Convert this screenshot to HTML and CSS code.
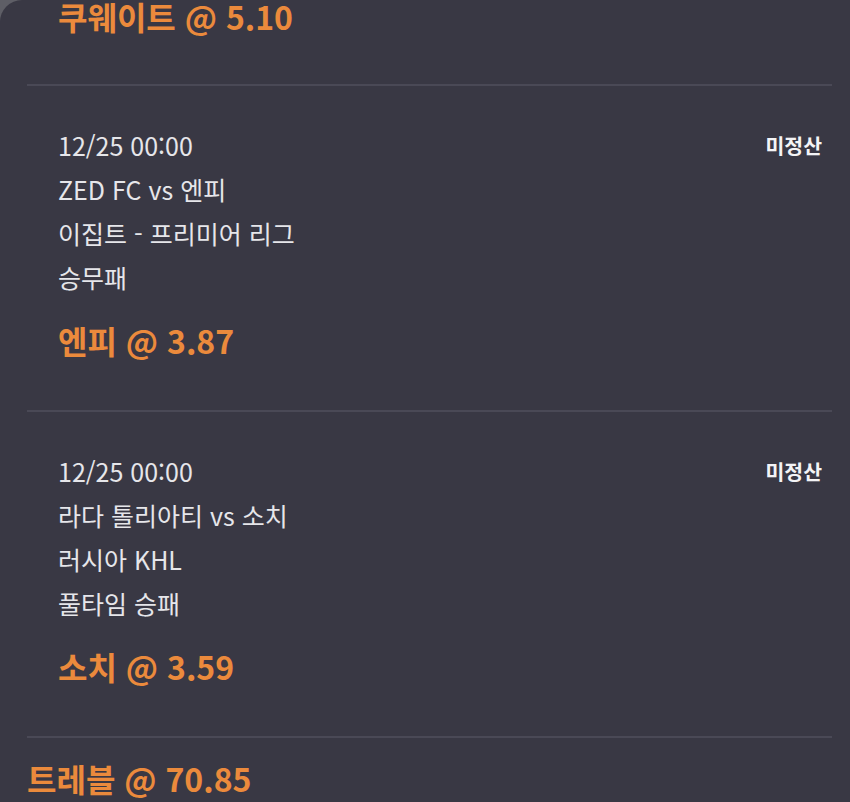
FILE: index.html
```html
<!DOCTYPE html>
<html lang="ko">

<head>
    <meta charset="UTF-8">
    <meta name="viewport" content="width=device-width, initial-scale=1.0">
    <title>베팅 내역</title>
    <link rel="stylesheet" href="styles.css">
</head>

<body>
    <div class="card">
        <p class="pick pick-top">쿠웨이트 @ 5.10</p>

        <div class="bet">
            <div class="bet-head">
                <p class="line">12/25 00:00</p>
                <span class="status">미정산</span>
            </div>
            <p class="line">ZED FC vs 엔피</p>
            <p class="line">이집트 - 프리미어 리그</p>
            <p class="line">승무패</p>
            <p class="pick">엔피 @ 3.87</p>
        </div>

        <div class="bet">
            <div class="bet-head">
                <p class="line">12/25 00:00</p>
                <span class="status">미정산</span>
            </div>
            <p class="line">라다 톨리아티 vs 소치</p>
            <p class="line">러시아 KHL</p>
            <p class="line">풀타임 승패</p>
            <p class="pick">소치 @ 3.59</p>
        </div>

        <p class="pick pick-group">트레블 @ 70.85</p>
    </div>
</body>

</html>
```

FILE: styles.css
```css
* {
    margin: 0;
    padding: 0;
}

body {
    background: #5e5e66;
    font-family: "Noto Sans CJK KR", "Noto Sans", sans-serif;
}

.card {
    min-height: 100vh;
    background: #393844;
    border-top-left-radius: 22px;
    padding: 0 18px 0 27px;
    box-sizing: border-box;
}

.pick {
    color: #eb8a3c;
    font-size: 32px;
    font-weight: bold;
    line-height: 44px;
    margin-top: 19px;
}

.card .pick-top {
    margin-top: 0;
    line-height: 32px;
    padding-left: 31px;
    padding-bottom: 52px;
}

.card .pick-group {
    margin-top: 18px;
}

.bet {
    border-top: 2px solid #4a4956;
    padding: 37px 10px 48px 31px;
}

.bet:last-of-type {
    border-bottom: 2px solid #4a4956;
}

.bet-head {
    display: flex;
    justify-content: space-between;
    align-items: center;
}

.line {
    color: #e6e6ea;
    font-size: 25px;
    line-height: 44px;
}

.status {
    color: #f4f4f6;
    font-size: 20.5px;
    font-weight: bold;
}
```
